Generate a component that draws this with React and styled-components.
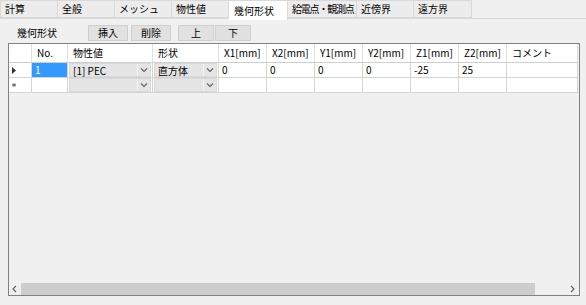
import React from "react";
import styled, { createGlobalStyle, css } from "styled-components";

const Global = createGlobalStyle`
  html, body { margin: 0; padding: 0; background: #f0f0f0; }
  body { font-family: "Noto Sans CJK JP", "Noto Sans", sans-serif; font-size: 10px; line-height: 12px; color: #000; }
  * { box-sizing: border-box; }
`;

const Page = styled.div`
  width: 586px;
  height: 305px;
  display: flex;
  flex-direction: column;
  overflow: hidden;
`;

const TabBar = styled.div`
  display: flex;
  height: 19px;
  align-items: flex-start;
  border-bottom: 1px solid #d9d9d9;
`;

const Tab = styled.div`
  width: ${(p) => p.$w}px;
  height: 18px;
  padding-left: 4px;
  display: flex;
  align-items: center;
  white-space: nowrap;
  overflow: hidden;
  letter-spacing: ${(p) => (p.$tight ? "-1.2px" : "0")};
  background: #ececec;
  border: 1px solid #d9d9d9;
  border-left: ${(p) => (p.$first ? "1px solid #d9d9d9" : "none")};
  ${(p) =>
    p.$active &&
    css`
      background: #ffffff;
      height: 20px;
      border-bottom: none;
      margin-bottom: -1px;
      padding-left: 5px;
    `}
`;

const Toolbar = styled.div`
  height: 24px;
  display: flex;
  align-items: center;
  padding-top: 3px;
`;

const ToolLabel = styled.div`
  width: 88px;
  padding-left: 17px;
`;

const Btn = styled.button`
  width: ${(p) => p.$w}px;
  height: 16px;
  margin-right: ${(p) => p.$mr}px;
  padding: 0;
  font: inherit;
  line-height: 12px;
  background: #e1e1e1;
  border: 1px solid #cfcfcf;
  color: #000;
`;

const GridBox = styled.div`
  margin: 0 6px 0 8px;
  height: 253px;
  border: 1px solid #828282;
  display: flex;
  flex-direction: column;
  background: #f0f0f0;
`;

const cols = "23px 36px 85px 66px 48px 48px 48px 48px 48px 48px 71px";

const Row = styled.div`
  display: grid;
  grid-template-columns: ${cols};
  grid-template-rows: ${(p) => p.$h}px;
  height: ${(p) => p.$h}px;
  flex-shrink: 0;
`;

const HeadCell = styled.div`
  min-height: 0;
  background: #ffffff;
  border-right: 1px solid #e0e0e0;
  border-bottom: 1px solid #cfcfcf;
  padding-left: 5px;
  display: flex;
  align-items: center;
  white-space: nowrap;
  overflow: hidden;
`;

const Cell = styled.div`
  min-height: 0;
  background: ${(p) => (p.$sel ? "#3399ff" : "#ffffff")};
  color: ${(p) => (p.$sel ? "#ffffff" : "#000")};
  border-right: 1px solid #d4d4d4;
  border-bottom: 1px solid #d4d4d4;
  padding-left: 3px;
  display: flex;
  align-items: center;
  white-space: nowrap;
  overflow: hidden;
`;

const RowHead = styled.div`
  min-height: 0;
  background: #ffffff;
  border-right: 1px solid #d4d4d4;
  border-bottom: 1px solid #d4d4d4;
  padding-left: 3px;
  display: flex;
  align-items: center;
  font-size: 8px;
  color: #444;
`;

const ComboCell = styled.div`
  min-height: 0;
  background: #ffffff;
  border-right: 1px solid #d4d4d4;
  border-bottom: 1px solid #d4d4d4;
  padding: 0 1px;
  display: flex;
`;

const ComboBody = styled.div`
  flex: 1;
  display: flex;
  background: #e5e5e5;
  border: 1px solid #d9d9d9;
`;

const ComboText = styled.div`
  flex: 1;
  padding-left: 3px;
  line-height: 11px;
  display: flex;
  align-items: center;
  white-space: nowrap;
`;

const ComboArrow = styled.div`
  width: 13px;
  display: flex;
  align-items: center;
  justify-content: center;
  border-left: 1px solid #f4f4f4;
`;

const Empty = styled.div`
  flex: 1;
`;

const Scroll = styled.div`
  height: 12px;
  display: flex;
  flex-shrink: 0;
  background: #f0f0f0;
`;

const ScrollBtn = styled.div`
  width: 12px;
  display: flex;
  align-items: center;
  justify-content: center;
`;

const Thumb = styled.div`
  width: 514px;
  background: #cdcdcd;
`;

const Track = styled.div`
  flex: 1;
`;

const Chevron = ({ dir = "down" }) => {
  const d =
    dir === "down"
      ? "M1 2.5 L4 5.5 L7 2.5"
      : dir === "left"
      ? "M5 1 L2 4 L5 7"
      : "M2 1 L5 4 L2 7";
  return (
    <svg width="8" height="8" viewBox="0 0 8 8">
      <path d={d} fill="none" stroke="#606060" strokeWidth="1.1" />
    </svg>
  );
};

const Tri = () => (
  <svg width="4" height="7" viewBox="0 0 4 7">
    <path d="M0 0 L4 3.5 L0 7 Z" fill="#333" />
  </svg>
);

const NewMark = () => (
  <svg width="4" height="4" viewBox="0 0 4 4">
    <path d="M2 0 V4 M0 1 L4 3 M0 3 L4 1" stroke="#555" strokeWidth="0.8" />
  </svg>
);

const Combo = ({ children }) => (
  <ComboCell>
    <ComboBody>
      <ComboText>{children}</ComboText>
      <ComboArrow>
        <Chevron />
      </ComboArrow>
    </ComboBody>
  </ComboCell>
);

const tabs = [
  ["計算", 58],
  ["全般", 57],
  ["メッシュ", 57],
  ["物性値", 57],
  ["幾何形状", 59, true],
  ["給電点・観測点", 69, false, true],
  ["近傍界", 57],
  ["遠方界", 58],
];

const headers = ["", "No.", "物性値", "形状", "X1[mm]", "X2[mm]", "Y1[mm]", "Y2[mm]", "Z1[mm]", "Z2[mm]", "コメント"];

export default function App() {
  return (
    <Page>
      <Global />
      <TabBar>
        {tabs.map(([t, w, a, tight], i) => (
          <Tab key={t} $w={w} $active={a} $tight={tight} $first={i === 0}>
            {t}
          </Tab>
        ))}
      </TabBar>
      <Toolbar>
        <ToolLabel>幾何形状</ToolLabel>
        <Btn $w={40} $mr={3}>挿入</Btn>
        <Btn $w={40} $mr={7}>削除</Btn>
        <Btn $w={36} $mr={1}>上</Btn>
        <Btn $w={36} $mr={0}>下</Btn>
      </Toolbar>
      <GridBox>
        <Row $h={19}>
          {headers.map((h, i) => (
            <HeadCell key={i}>{h}</HeadCell>
          ))}
        </Row>
        <Row $h={15}>
          <RowHead>
            <Tri />
          </RowHead>
          <Cell $sel>1</Cell>
          <Combo>[1] PEC</Combo>
          <Combo>直方体</Combo>
          <Cell>0</Cell>
          <Cell>0</Cell>
          <Cell>0</Cell>
          <Cell>0</Cell>
          <Cell>-25</Cell>
          <Cell>25</Cell>
          <Cell />
        </Row>
        <Row $h={15}>
          <RowHead>
            <NewMark />
          </RowHead>
          <Cell />
          <Combo />
          <Combo />
          <Cell />
          <Cell />
          <Cell />
          <Cell />
          <Cell />
          <Cell />
          <Cell />
        </Row>
        <Empty />
        <Scroll>
          <ScrollBtn>
            <Chevron dir="left" />
          </ScrollBtn>
          <Thumb />
          <Track />
          <ScrollBtn>
            <Chevron dir="right" />
          </ScrollBtn>
        </Scroll>
      </GridBox>
    </Page>
  );
}
